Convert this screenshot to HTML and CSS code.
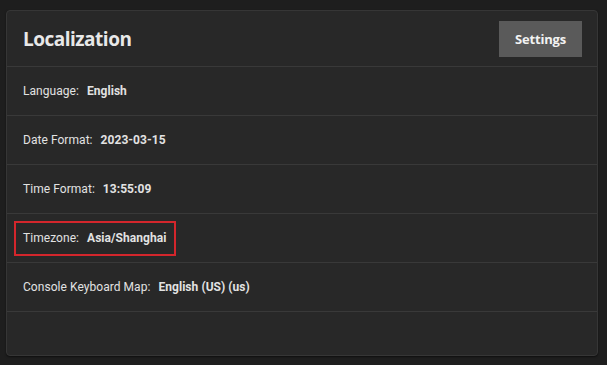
FILE: index.html
```html
<!DOCTYPE html>
<html lang="en">
<head>
<meta charset="UTF-8">
<meta name="viewport" content="width=device-width, initial-scale=1.0">
<title>Localization</title>
<link rel="stylesheet" href="styles.css">
</head>
<body>
<section class="card">
    <header class="card-header">
        <h2>Localization</h2>
        <button class="settings-button">Settings</button>
    </header>
    <div class="row">
        <span class="label">Language:</span>
        <span class="value">English</span>
    </div>
    <div class="row">
        <span class="label">Date Format:</span>
        <span class="value">2023-03-15</span>
    </div>
    <div class="row">
        <span class="label">Time Format:</span>
        <span class="value">13:55:09</span>
    </div>
    <div class="row">
        <span class="highlight">
            <span class="label">Timezone:</span>
            <span class="value">Asia/Shanghai</span>
        </span>
    </div>
    <div class="row">
        <span class="label">Console Keyboard Map:</span>
        <span class="value">English (US) (us)</span>
    </div>
    <div class="card-footer"></div>
</section>
</body>
</html>
```

FILE: styles.css
```css
body {
    margin: 0;
    padding: 10px 9px 10px 6px;
    background-color: #1e1e1e;
    font-family: Roboto, "Liberation Sans", sans-serif;
    color: #e2e2e2;
}
.card {
    background-color: #282828;
    border: 1px solid #363636;
    border-radius: 4px;
    box-shadow: 0 1px 2px rgba(0, 0, 0, 0.5);
}
.card-header {
    display: flex;
    align-items: center;
    justify-content: space-between;
    height: 55px;
    padding: 0 15px 0 16px;
    border-bottom: 1px solid #393939;
}
.card-header h2 {
    margin: 0;
    font-family: "Open Sans", sans-serif;
    font-size: 19px;
    font-weight: 700;
    color: #e8e8e8;
    letter-spacing: -0.5px;
}
.settings-button {
    margin-top: 1px;
    width: 83px;
    height: 36px;
    border: 0;
    background-color: #5a5a5a;
    color: #f2f2f2;
    font-family: "Open Sans", sans-serif;
    font-size: 13px;
    font-weight: 700;
    letter-spacing: -0.2px;
    cursor: pointer;
}
.row {
    display: flex;
    align-items: center;
    height: 48px;
    padding: 0 16px;
    border-bottom: 1px solid #393939;
    font-size: 12px;
    letter-spacing: 0.05px;
}
.label {
    margin-right: 8px;
}
.value {
    font-weight: 700;
}
.highlight {
    display: flex;
    align-items: center;
    margin-left: -9px;
    padding: 0 8px 0 7px;
    height: 31px;
    border: 2px solid #d3262c;
}
.card-footer {
    height: 43px;
}
```
